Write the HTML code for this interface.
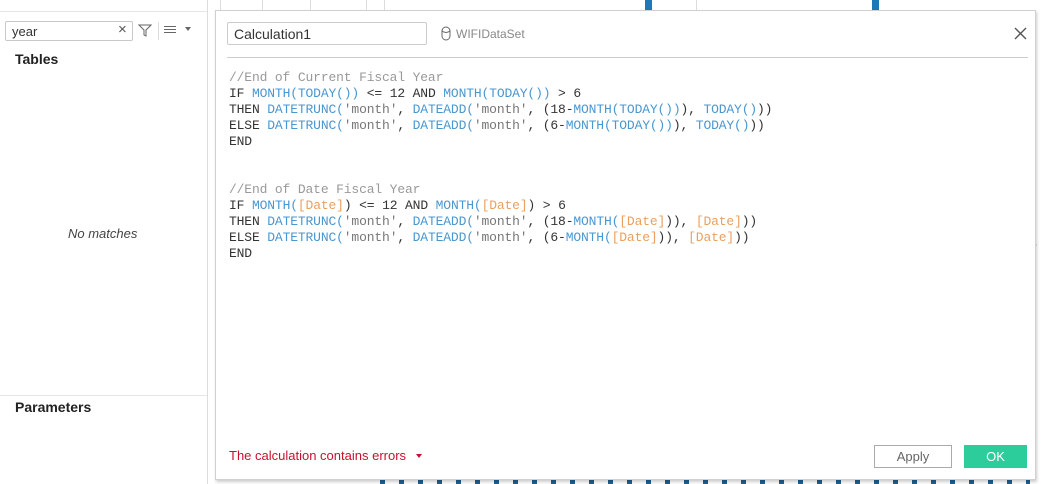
<!DOCTYPE html>
<html><head><style>
body{margin:0;width:1042px;height:484px;overflow:hidden;background:#fff;font-family:"Liberation Sans",sans-serif;position:relative}
.abs{position:absolute}
.code{font-family:"Liberation Mono",monospace;font-size:13px;letter-spacing:-0.15px;line-height:16px;color:#333;white-space:pre}
.f{color:#4a97cf}.s{color:#777}.c{color:#999}.d{color:#e9a060}
</style></head><body>
<div class="abs" style="left:207px;top:0;width:1px;height:484px;background:#ddd"></div>
<div class="abs" style="left:0;top:11px;width:207px;height:1px;background:#e6e6e6"></div>
<div class="abs" style="left:5px;top:21px;width:128px;height:20px;border:1px solid #c8c8c8;border-radius:2px;box-sizing:border-box"></div>
<div class="abs" style="left:12px;top:24px;font-size:13px;color:#333">year</div>
<div class="abs" style="left:118px;top:21px;font-size:15px;color:#555">×</div>
<svg class="abs" style="left:138px;top:23px" width="14" height="14"><path d="M1 2h12l-5 5v6l-2-1v-5z" fill="none" stroke="#666"/></svg>
<div class="abs" style="left:158px;top:22px;width:1px;height:18px;background:#ddd"></div>
<svg class="abs" style="left:164px;top:26px" width="12" height="9"><g fill="#666"><rect x="0" y="0" width="12" height="1"/><rect x="0" y="3" width="12" height="1"/><rect x="0" y="6" width="12" height="1"/></g></svg>
<div class="abs" style="left:185px;top:27px;width:0;height:0;border-left:3px solid transparent;border-right:3px solid transparent;border-top:4px solid #666"></div>
<div class="abs" style="left:15px;top:51px;font-size:14px;font-weight:bold;color:#222">Tables</div>
<div class="abs" style="left:68px;top:226px;font-size:13px;font-style:italic;color:#444">No matches</div>
<div class="abs" style="left:0;top:395px;width:207px;height:1px;background:#e6e6e6"></div>
<div class="abs" style="left:15px;top:399px;font-size:14px;font-weight:bold;color:#222">Parameters</div>
<div class="abs" style="left:220px;top:0;width:1px;height:10px;background:#ddd"></div>
<div class="abs" style="left:262px;top:0;width:1px;height:10px;background:#ddd"></div>
<div class="abs" style="left:310px;top:0;width:1px;height:10px;background:#ddd"></div>
<div class="abs" style="left:366px;top:0;width:1px;height:10px;background:#ddd"></div>
<div class="abs" style="left:384px;top:0;width:1px;height:10px;background:#ddd"></div>
<div class="abs" style="left:645px;top:0;width:7px;height:10px;background:#1f77b4"></div>
<div class="abs" style="left:872px;top:0;width:7px;height:10px;background:#1f77b4"></div>
<div class="abs" style="left:696px;top:0;width:1px;height:10px;background:#ddd"></div>
<div class="abs" style="left:1031px;top:240px;width:0;height:0;border-top:5px solid transparent;border-bottom:5px solid transparent;border-left:6px solid #bbb"></div>
<div class="abs" style="left:380px;top:480px;width:650px;height:4px;background:repeating-linear-gradient(90deg,#1f5f8f 0 5px,transparent 5px 19px)"></div>
<div class="abs" style="left:215px;top:10px;width:821px;height:470px;background:#fff;border:1px solid #d0d0d0;box-sizing:border-box;box-shadow:1px 2px 3px rgba(0,0,0,.2)"></div>
<div class="abs" style="left:227px;top:22px;width:200px;height:23px;border:1px solid #ccc;border-radius:2px;box-sizing:border-box"></div>
<div class="abs" style="left:234px;top:26px;font-size:14px;color:#333">Calculation1</div>
<svg class="abs" style="left:441px;top:26px" width="10" height="15"><rect x="1" y="1" width="8" height="13" rx="4" fill="none" stroke="#666"/><path d="M1 5q4 3 8 0" fill="none" stroke="#666"/></svg>
<div class="abs" style="left:456px;top:27px;font-size:12px;color:#888">WIFIDataSet</div>
<svg class="abs" style="left:1014px;top:27px" width="13" height="13"><path d="M1 1L12 12M12 1L1 12" stroke="#555" stroke-width="1.4"/></svg>
<div class="abs" style="left:227px;top:57px;width:801px;height:1px;background:#ccc"></div>
<div class="abs code" style="left:229px;top:70px"><span class="c">//End of Current Fiscal Year</span>
IF <span class="f">MONTH(TODAY())</span> &lt;= 12 AND <span class="f">MONTH(TODAY())</span> &gt; 6
THEN <span class="f">DATETRUNC(</span><span class="s">'month'</span>, <span class="f">DATEADD(</span><span class="s">'month'</span>, (18-<span class="f">MONTH(TODAY())</span>), <span class="f">TODAY()</span>))
ELSE <span class="f">DATETRUNC(</span><span class="s">'month'</span>, <span class="f">DATEADD(</span><span class="s">'month'</span>, (6-<span class="f">MONTH(TODAY())</span>), <span class="f">TODAY()</span>))
END


<span class="c">//End of Date Fiscal Year</span>
IF <span class="f">MONTH(</span><span class="d">[Date]</span>) &lt;= 12 AND <span class="f">MONTH(</span><span class="d">[Date]</span>) &gt; 6
THEN <span class="f">DATETRUNC(</span><span class="s">'month'</span>, <span class="f">DATEADD(</span><span class="s">'month'</span>, (18-<span class="f">MONTH(</span><span class="d">[Date]</span>)), <span class="d">[Date]</span>))
ELSE <span class="f">DATETRUNC(</span><span class="s">'month'</span>, <span class="f">DATEADD(</span><span class="s">'month'</span>, (6-<span class="f">MONTH(</span><span class="d">[Date]</span>)), <span class="d">[Date]</span>))
END</div>
<div class="abs" style="left:229px;top:448px;font-size:13px;color:#c8102e">The calculation contains errors</div>
<div class="abs" style="left:416px;top:454px;width:0;height:0;border-left:3px solid transparent;border-right:3px solid transparent;border-top:4px solid #c8102e"></div>
<div class="abs" style="left:874px;top:445px;width:78px;height:23px;border:1px solid #aaa;box-sizing:border-box;text-align:center;font-size:13px;line-height:21px;color:#666">Apply</div>
<div class="abs" style="left:964px;top:445px;width:63px;height:23px;background:#2dcc9b;text-align:center;font-size:13px;line-height:23px;color:#fff">OK</div>
</body></html>
